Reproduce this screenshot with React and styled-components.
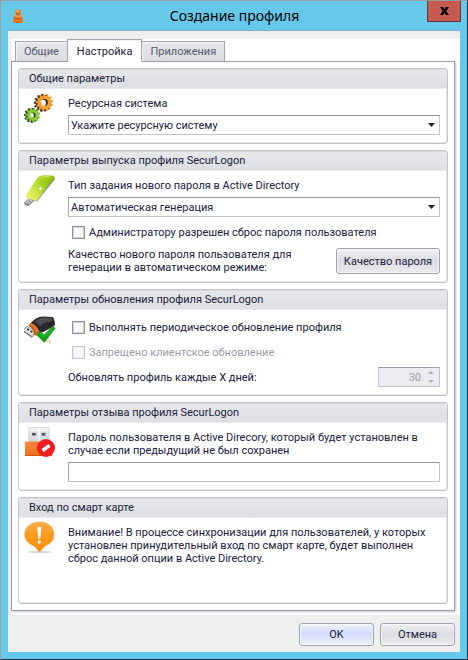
import React from 'react';
import styled, { createGlobalStyle, css } from 'styled-components';

const GlobalStyle = createGlobalStyle`
  *, *::before, *::after { box-sizing: border-box; }
  html, body { margin: 0; }
  body, button, input, select {
    font-family: Roboto, "DejaVu Sans Condensed", sans-serif;
    font-size: 11px;
    line-height: 13px;
    color: #20203c;
  }
`;

const Window = styled.div`
  min-height: 100vh;
  display: flex;
  flex-direction: column;
  padding: 0 7px 7px;
  background: #66c9e9;
  border: 1px solid #9a9a9a;
  border-right-color: #26324a;
  border-bottom-color: #26324a;
`;

const TitleBar = styled.header`
  height: 29px;
  display: grid;
  grid-template-columns: 34px 1fr 34px;
  align-items: center;
  margin-right: -1px;
`;

const AppIcon = styled.svg`
  width: 12px;
  height: 16px;
  margin-left: 4px;
`;

const Title = styled.h1`
  margin: 0;
  text-align: center;
  font: 400 14px/20px "Noto Sans", sans-serif;
  color: #000;
`;

const CloseButton = styled.button`
  align-self: start;
  height: 21px;
  padding: 0;
  display: grid;
  place-items: center;
  background: #c4594f;
  border: 1px solid #5c3a40;
  border-top: 0;
`;

const Client = styled.main`
  flex: 1;
  display: flex;
  flex-direction: column;
  padding: 8px 0 0 3px;
  background: #efefef;
  border-top: 1px solid #7fb2c4;
`;

const Tabs = styled.div`
  flex: 1;
  display: flex;
  flex-direction: column;
  padding: 0 5px 4px 0;
  background: #fff;
`;

const TabList = styled.div`
  display: flex;
  align-items: flex-end;
  height: 22px;
  padding-left: 4px;
`;

const Tab = styled.button`
  height: 20px;
  padding: 0 8px;
  color: #55566e;
  background: linear-gradient(#e6e7ea, #dcdde2);
  border: 1px solid #a3a5b3;
  border-bottom: 0;
  box-shadow: inset 1px 1px #f4f4f7;
  & + & { border-left: 0; }
  ${(p) => p.$active && css`
    position: relative;
    height: 23px;
    margin: 0 0 -1px -1px;
    padding: 0 9px;
    color: #20203c;
    background: #fff;
    && { border-left: 1px solid #a3a5b3; }
  `}
`;

const TabPanel = styled.div`
  flex: 1;
  display: flex;
  flex-direction: column;
  gap: 6px;
  padding: 6px;
  border: 1px solid #9b9dab;
  box-shadow: 1px 1px 2px #c9c9cf;
`;

const Group = styled.section`
  flex: ${(p) => (p.$grow ? 1 : 'none')};
  border: 1px solid #c3c5cd;
  border-radius: 3px;
  box-shadow: inset -1px -1px #e6e7eb;
`;

const GroupTitle = styled.h2`
  margin: 0;
  height: 20px;
  padding: 3px 10px;
  font-size: 11px;
  font-weight: 400;
  line-height: 14px;
  background: linear-gradient(#e7e8eb, #dedfe3);
  border-bottom: 1px solid #ebebee;
  box-shadow: inset 0 1px #d9dae0;
`;

const GroupBody = styled.div`
  display: grid;
  grid-template-columns: 32px 1fr;
  column-gap: 12px;
  padding: 0 7px 8px 5px;
`;

const GroupIcon = styled.svg`
  width: 32px;
  height: 34px;
  margin-top: 2px;
`;

const Fields = styled.div`
  min-width: 0;
  display: flex;
  flex-direction: column;
  gap: ${(p) => p.$gap || 5}px;
  padding-top: ${(p) => p.$top || 8}px;
`;

const FieldLabel = styled.label`
  display: block;
`;

const Text = styled.p`
  margin: 0;
`;

const field = css`
  width: 100%;
  height: 20px;
  margin: 0;
  padding: 0 2px;
  background: #fff;
  border: 1px solid #c3c5cc;
  border-top-color: #9092a0;
  border-left-color: #a6a8b4;
  border-radius: 0;
  outline: none;
`;

const SelectBox = styled.div`
  display: grid;
  align-items: center;
  & > * { grid-area: 1 / 1; }
`;

const Select = styled.select`
  ${field}
  appearance: none;
`;

const Caret = styled.svg`
  width: 7px;
  height: 4px;
  justify-self: end;
  margin-right: 5px;
  pointer-events: none;
`;

const TextInput = styled.input`
  ${field}
`;

const CheckLabel = styled.label`
  display: flex;
  align-items: center;
  gap: 4px;
  height: 13px;
  padding-left: 4px;
  color: ${(p) => (p.$disabled ? '#9c9ca8' : 'inherit')};
`;

const CheckBox = styled.input`
  appearance: none;
  width: 13px;
  height: 13px;
  margin: 0;
  background: #fbfbfc;
  border: 1px solid #9092a2;
  box-shadow: inset 0 0 0 1px #d3d5de;
  &:disabled {
    border-color: #c8cad2;
    box-shadow: inset 0 0 0 1px #ececf0;
  }
`;

const Row = styled.div`
  display: flex;
  justify-content: space-between;
  align-items: center;
`;

const Button = styled.button`
  height: ${(p) => (p.$tall ? 26 : 23)}px;
  width: ${(p) => (p.$tall ? 104 : 75)}px;
  padding: 0;
  border: 1px solid #9fa1ae;
  border-radius: 3px;
  box-shadow: inset 0 0 0 1px rgba(255, 255, 255, 0.6);
  background: ${(p) => (p.$primary
    ? 'linear-gradient(#eff2fd, #d3dcfa 45%, #f0f3fe)'
    : 'linear-gradient(#f1f1f3, #dcdde2 50%, #ebebef)')};
`;

const Spinner = styled.div`
  display: flex;
  align-items: center;
  width: 62px;
  height: 20px;
  background: #ebecef;
  border: 1px solid #c3c5cd;
  border-top-color: #9b9dab;
`;

const NumberInput = styled.input`
  flex: 1;
  min-width: 0;
  padding: 0;
  border: 0;
  background: none;
  color: #9c9ca8;
  text-align: right;
  appearance: textfield;
  &::-webkit-inner-spin-button { display: none; }
`;

const SpinButtons = styled.div`
  display: flex;
  flex-direction: column;
  width: 16px;
  margin-left: 2px;
`;

const SpinButton = styled.button`
  height: 9px;
  padding: 0;
  display: grid;
  place-items: center;
  background: none;
  border: 0;
`;

const Footer = styled.footer`
  display: flex;
  justify-content: flex-end;
  gap: 6px;
  padding: 8px 5px 6px;
`;

const gearPath = (cx, cy, outer, inner, teeth) => {
  const points = [];
  for (let i = 0; i < teeth; i += 1) {
    [[0, inner], [0.3, inner], [0.4, outer], [0.8, outer], [0.95, inner]].forEach(([t, r]) => {
      const a = ((i + t) / teeth) * Math.PI * 2;
      points.push(`${(cx + r * Math.cos(a)).toFixed(2)} ${(cy + r * Math.sin(a)).toFixed(2)}`);
    });
  }
  return `M${points.join('L')}Z`;
};

const ring = (cx, cy, r) => `M${cx - r} ${cy}a${r} ${r} 0 1 0 ${r * 2} 0a${r} ${r} 0 1 0 ${-r * 2} 0Z`;

function Gears() {
  const big = gearPath(20.5, 11.5, 8.8, 6.8, 13) + ring(20.5, 11.5, 3.4);
  const small = gearPath(9, 24, 7.4, 5.6, 11) + ring(9, 24, 2.6);
  return (
    <GroupIcon viewBox="0 0 32 34" aria-hidden="true">
      <defs>
        <linearGradient id="gearOrange" x1="0" y1="0" x2="1" y2="1">
          <stop offset="0" stopColor="#f59a28" /><stop offset="1" stopColor="#f9a83a" />
        </linearGradient>
      </defs>
      <g fillRule="evenodd">
        <path d={big} fill="#292522" transform="translate(-2 0.5)" />
        <path d={big} fill="#4b3823" transform="translate(-1 0.3)" />
        <path d={big} fill="url(#gearOrange)" />
        <path d={small} fill="#20251b" transform="translate(-1.8 0.4)" />
        <path d={small} fill="#3b5722" transform="translate(-0.9 0.2)" />
        <path d={small} fill="#8ac83a" />
      </g>
    </GroupIcon>
  );
}

function GreenStick() {
  const body = 'M12 6.5Q15 2.6 19 2.2L28.5 2.6Q31.2 2.8 29.8 5.4L13.6 26.4Q12.4 28.4 10.6 27.4L3.6 24.8Q1.6 24 2.6 22Z';
  return (
    <GroupIcon viewBox="0 0 32 34" aria-hidden="true">
      <defs>
        <linearGradient id="stick" x1="0.2" y1="0.1" x2="0.8" y2="0.7">
          <stop offset="0" stopColor="#c5dc3d" /><stop offset="0.5" stopColor="#9bcb18" /><stop offset="1" stopColor="#72b010" />
        </linearGradient>
        <linearGradient id="stickGlow" x1="0" y1="1" x2="0.7" y2="0.2">
          <stop offset="0" stopColor="#f3f865" /><stop offset="0.45" stopColor="#e2f15a" stopOpacity=".8" /><stop offset="1" stopColor="#b2d936" stopOpacity="0" />
        </linearGradient>
      </defs>
      <path d="M30.2 4 31 6.2 13 28.6 11 28Z" fill="#8e958c" />
      <path d="M0 29.5 4.8 25 10.5 27.5 4.5 33 1 32.5Z" fill="#8a8b8f" />
      <path d="M1 29.5 5.2 25.4 8.8 27.5 4.2 31.5Z" fill="#cacbcf" />
      <path d="m2.8 29.3 1.5 1.1M4.8 27.7l1.4 1" stroke="#55565b" />
      <path d={body} fill="url(#stick)" />
      <path d={body} fill="url(#stickGlow)" />
      <path d="M17 4.4 19.5 3.5 26 3.8" fill="none" stroke="#d3e877" strokeWidth=".8" />
      <path d="m16.5 13 .8 1.8 2 .4-1.8 1-1 1.8-.7-1.8-1.7-.4 1.7-1Z" fill="#fcffd2" />
    </GroupIcon>
  );
}

function DriveChecked() {
  return (
    <GroupIcon viewBox="0 0 32 34" aria-hidden="true">
      <path d="m-1 18.5 4-4.2 9 5-4.2 6.2Z" fill="#dedfe2" stroke="#77787c" strokeWidth=".8" />
      <path d="M0 19.5 7.5 24.3" stroke="#5b5c60" />
      <path d="m3.2 17 1.8 1M6.5 19l1.8 1" stroke="#303135" strokeWidth="1.6" />
      <path d="M4.5 13.5Q5.5 10.5 9.5 9.5L17 19.5 13.6 24 9.5 22.8Q9.8 16.5 4.5 13.5Z" fill="#e2742b" />
      <path d="M5 13.3q6 3 6.3 9.6" fill="none" stroke="#9d4d1b" />
      <path d="M7 10.8Q12 5.2 19 4.6L28.5 5Q30.6 6.5 31 12.5 30.3 14.3 26 16.4L16 21.5Q14.4 14.5 7 10.8Z" fill="#29292c" />
      <path d="M10.5 9.5Q14.6 6.2 20 5.6L28 6.2 28.8 8.8 19 11.2Q17 12 16.5 14.2 14.5 11 10.5 9.5Z" fill="#4e4e51" />
      <path d="M12.5 22.8 15.5 19l4.6 3.7 9-8.4 2 2L20.4 30.5Z" fill="#10a41b" stroke="#087f12" strokeWidth=".5" />
      <path d="m16 20.5 4.2 4 7.2-6.5" fill="none" stroke="#41cc48" strokeWidth=".8" />
      <path d="m24.5 26.5 1.8 4.5M22.5 28.5l1.7 1.2" stroke="#e1a45e" strokeWidth=".9" />
    </GroupIcon>
  );
}

function DriveBlocked() {
  return (
    <GroupIcon viewBox="0 0 32 34" aria-hidden="true">
      <defs>
        <linearGradient id="driveBody" x2="1" y2="1">
          <stop offset="0" stopColor="#f68b40" /><stop offset="1" stopColor="#e66313" />
        </linearGradient>
        <linearGradient id="driveTip" x2="0" y2="1">
          <stop offset="0" stopColor="#f4f4f4" /><stop offset="1" stopColor="#d2d2d4" />
        </linearGradient>
      </defs>
      <path d="M4.8 2.5h20.4V18H4.8Z" fill="url(#driveTip)" stroke="#d0d0d2" strokeWidth=".7" />
      <path d="M15 3v14" stroke="#fff" />
      <path d="M7.7 7.5h4.6v3.5H7.7ZM17.3 7.5h4.6v3.5h-4.6Z" fill="#c4c4c5" />
      <path d="M8.2 8h3.5v2.5H8.2ZM17.8 8h3.5v2.5h-3.5Z" fill="#53545a" />
      <path d="M1 16.5h27V31H1Z" fill="url(#driveBody)" />
      <path d="M1 30.5h20" stroke="#d7530a" />
      <circle cx="22" cy="23" r="9" fill="#ee1c23" />
      <path d="m18.5 25.5 7-5" stroke="#fff" strokeWidth="3.5" />
    </GroupIcon>
  );
}

function Warning() {
  return (
    <GroupIcon viewBox="0 0 32 34" aria-hidden="true">
      <defs>
        <linearGradient id="balloon" x2="0" y2="1">
          <stop offset="0" stopColor="#f9ae49" /><stop offset=".45" stopColor="#fb9a1e" /><stop offset="1" stopColor="#ff8b00" />
        </linearGradient>
      </defs>
      <ellipse cx="16" cy="32" rx="12" ry="1" fill="#d5d5d5" />
      <path d="M15.5 2C24 2 30 7.2 30 14.3c0 6.5-4.2 10.1-9 11.5L15.5 32 10 25.8C4.5 24.2.7 20.3.7 14.3.7 7.2 7 2 15.5 2Z" fill="url(#balloon)" stroke="#f2a246" strokeWidth=".6" />
      <path d="M13.3 7.4q2-1.3 4 0l-1 11.2h-2Z" fill="#fff" />
      <circle cx="15.3" cy="22" r="1.7" fill="#fff" />
    </GroupIcon>
  );
}

function Arrow({ up }) {
  return (
    <svg width="6" height="3" viewBox="0 0 6 3" aria-hidden="true">
      <path d={up ? 'M0 3h6L3 0Z' : 'M0 0h6L3 3Z'} fill="#aeb0b8" />
    </svg>
  );
}

function DropDown({ id, value }) {
  return (
    <SelectBox>
      <Select id={id} defaultValue={value}>
        <option>{value}</option>
      </Select>
      <Caret viewBox="0 0 7 4" aria-hidden="true"><path d="M0 0h7L3.5 4Z" fill="#20203c" /></Caret>
    </SelectBox>
  );
}

function Check({ label, disabled }) {
  return (
    <CheckLabel $disabled={disabled}>
      <CheckBox type="checkbox" disabled={disabled} />
      {label}
    </CheckLabel>
  );
}

function Section({ title, icon, grow, gap, top, children }) {
  return (
    <Group $grow={grow}>
      <GroupTitle>{title}</GroupTitle>
      <GroupBody>
        {icon}
        <Fields $gap={gap} $top={top}>{children}</Fields>
      </GroupBody>
    </Group>
  );
}

const CheckArea = styled.div`
  padding: 4px 0;
`;

export default function App() {
  return (
    <>
      <GlobalStyle />
      <Window>
        <TitleBar>
          <AppIcon viewBox="0 0 12 16" aria-hidden="true">
            <path d="M1 11.5 2.5 8h7l1.5 3.5v2L9 15H3l-2-1.5Z" fill="#e97319" />
            <path d="M3 5.5h6L10 10q-4 2-8 0Z" fill="#f79138" />
            <path d="M2.5 9.8q3.5 1.7 7 0" stroke="#ad4d13" fill="none" />
            <circle cx="6" cy="4" r="2.8" fill="#ed7d20" />
            <path d="M4 5.8q2 1.4 4 0" stroke="#b3510e" fill="none" />
            <circle cx="5.5" cy="3" r="1" fill="#ffc28c" />
          </AppIcon>
          <Title>Создание профиля</Title>
          <CloseButton aria-label="Закрыть">
            <svg width="9" height="8" viewBox="0 0 9 8" aria-hidden="true">
              <path d="M0 0h3l1.5 2.3L6 0h3L6.2 4 9 8H6L4.5 5.7 3 8H0l2.8-4Z" fill="#000" />
            </svg>
          </CloseButton>
        </TitleBar>
        <Client>
          <Tabs>
            <TabList role="tablist">
              <Tab role="tab" aria-selected="false">Общие</Tab>
              <Tab role="tab" aria-selected="true" $active>Настройка</Tab>
              <Tab role="tab" aria-selected="false">Приложения</Tab>
            </TabList>
            <TabPanel role="tabpanel">
              <Section title="Общие параметры" icon={<Gears />}>
                <FieldLabel htmlFor="resource">Ресурсная система</FieldLabel>
                <DropDown id="resource" value="Укажите ресурсную систему" />
              </Section>

              <Section title="Параметры выпуска профиля SecurLogon" icon={<GreenStick />}>
                <FieldLabel htmlFor="kind">Тип задания нового пароля в Active Directory</FieldLabel>
                <DropDown id="kind" value="Автоматическая генерация" />
                <CheckArea>
                  <Check label="Администратору разрешен сброс пароля пользователя" />
                </CheckArea>
                <Row>
                  <Text>
                    Качество нового пароля пользователя для
                    <br />
                    генерации в автоматическом режиме:
                  </Text>
                  <Button $tall>Качество пароля</Button>
                </Row>
              </Section>

              <Section title="Параметры обновления профиля SecurLogon" icon={<DriveChecked />} gap={4} top={7}>
                <CheckArea>
                  <Check label="Выполнять периодическое обновление профиля" />
                </CheckArea>
                <CheckArea>
                  <Check label="Запрещено клиентское обновление" disabled />
                </CheckArea>
                <Row>
                  <label htmlFor="days">Обновлять профиль каждые X дней:</label>
                  <Spinner>
                    <NumberInput id="days" type="number" defaultValue="30" disabled />
                    <SpinButtons>
                      <SpinButton disabled aria-label="Больше"><Arrow up /></SpinButton>
                      <SpinButton disabled aria-label="Меньше"><Arrow /></SpinButton>
                    </SpinButtons>
                  </Spinner>
                </Row>
              </Section>

              <Section title="Параметры отзыва профиля SecurLogon" icon={<DriveBlocked />}>
                <FieldLabel htmlFor="password">
                  Пароль пользователя в Active Direcory, который будет установлен в
                  <br />
                  случае если предыдущий не был сохранен
                </FieldLabel>
                <TextInput id="password" type="text" />
              </Section>

              <Section title="Вход по смарт карте" icon={<Warning />} grow>
                <Text>
                  Внимание! В процессе синхронизации для пользователей, у которых
                  <br />
                  установлен принудительный вход по смарт карте, будет выполнен
                  <br />
                  сброс данной опции в Active Directory.
                </Text>
              </Section>
            </TabPanel>
          </Tabs>
          <Footer>
            <Button $primary>OK</Button>
            <Button>Отмена</Button>
          </Footer>
        </Client>
      </Window>
    </>
  );
}
